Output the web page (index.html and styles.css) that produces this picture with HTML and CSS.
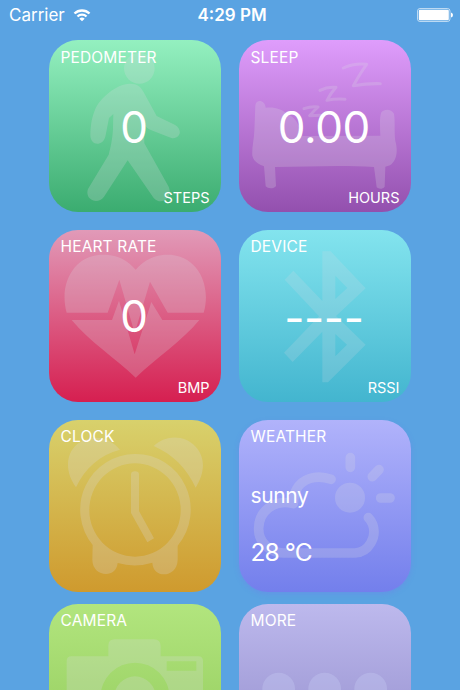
FILE: index.html
```html
<!DOCTYPE html>
<html lang="en">

<head>
    <meta charset="UTF-8">
    <meta name="viewport" content="width=device-width, initial-scale=1.0">
    <title>Dashboard</title>
    <link rel="stylesheet" href="styles.css">
</head>

<body>
    <header class="status-bar">
        <div class="carrier">
            <span>Carrier</span>
            <svg class="wifi" viewBox="0 0 54 42">
                <path d="M2 14 A36 36 0 0 1 52 14 L47 19 A29 29 0 0 0 7 19 Z" />
                <path d="M11 23 A23 23 0 0 1 43 23 L38 28 A16 16 0 0 0 16 28 Z" />
                <path d="M19 32 A11.500 11.500 0 0 1 35 32 L27 40 Z" />
            </svg>
        </div>
        <div class="time">4:29 PM</div>
        <svg class="battery" viewBox="0 0 36 14">
            <rect class="battery-case" x="0.500" y="0.500" width="32.500" height="13" rx="2.500" />
            <rect x="1.800" y="1.700" width="30" height="10.600" rx="1.200" />
            <path d="M34 4.500 Q36 5 36 7 Q36 9 34 9.500 Z" />
        </svg>
    </header>

    <main class="tiles">
        <section class="tile pedometer">
            <svg class="art" viewBox="27 30 516 516">
                <circle cx="298" cy="115" r="46" />
                <path d="M270 161 C292 161 303 171 311 187 L350 258 L404 284 C430 298 421 329 394 324 L338 302 C324 297 318 292 312 282 L313 340 L386 470 C400 503 364 529 341 504 L263 391 L192 500 C172 527 133 508 144 477 L206 374 C212 350 217 330 219 296 L220 252 L207 264 L196 320 C189 348 151 350 151 314 C152 281 157 258 166 237 C178 207 230 160 270 161 Z" />
            </svg>
            <h2>PEDOMETER</h2>
            <p class="value">0</p>
            <p class="unit">STEPS</p>
        </section>

        <section class="tile sleep">
            <svg class="art" viewBox="27 30 516 516">
                <path d="M76 226 C78 207 105 208 107 233 C135 230 154 237 171 251 C193 261 208 279 217 318 L451 317 C450 292 448 261 454 247 C463 236 484 237 492 251 C496 274 492 304 496 333 C506 368 497 395 480 406 L466 410 L464 470 C458 478 446 478 440 472 L432 411 C330 404 235 410 135 411 L138 468 C132 477 114 477 107 469 L102 409 C84 403 71 393 67 377 C65 354 72 329 73 303 Z" />
                <path class="line" d="M340 114 Q372 99 410 103 Q391 129 370 167 Q411 160 451 161 M270 181 Q293 169 318 172 Q302 190 291 211 Q320 205 345 208 M222 236 Q245 228 264 231 Q250 244 239 257 L270 256" />
            </svg>
            <h2>SLEEP</h2>
            <p class="value">0.00</p>
            <p class="unit">HOURS</p>
        </section>

        <section class="tile heart">
            <svg class="art" viewBox="27 24 516 516">
                <path d="M80 272 C56 187 101 98 188 98 C235 98 263 115 287 143 C314 114 340 98 384 98 C470 98 516 187 491 272 L383 272 L330 179 L284 334 L238 173 L203 272 Z" />
                <path d="M95 294 L216 294 L237 236 L284 397 L334 240 L367 294 L478 294 C424 359 350 407 287 467 C224 407 150 360 95 294 Z" />
            </svg>
            <h2>HEART RATE</h2>
            <p class="value">0</p>
            <p class="unit">BMP</p>
        </section>

        <section class="tile device">
            <svg class="art" viewBox="27 24 516 516">
                <path fill-rule="evenodd" d="M277 88 L302 88 L407 199 L318 282 L407 368 L294 481 L277 481 L277 329 L188 420 L162 392 L267 283 L164 173 L190 146 L277 237 Z M316 161 L316 231 L352 198 Z M316 336 L316 403 L351 368 Z" />
            </svg>
            <h2>DEVICE</h2>
            <p class="value">----</p>
            <p class="unit">RSSI</p>
        </section>

        <section class="tile clock">
            <svg class="art" viewBox="27 30 516 516">
                <path d="M108 232 C73 184 78 132 111 103 C149 72 206 77 240 119 C181 134 135 174 108 232 Z" />
                <path d="M341 108 C380 72 435 76 467 110 C499 145 493 192 467 233 C439 173 399 134 341 108 Z" />
                <path fill-rule="evenodd" d="M285 132 A165 167 0 0 1 413 407 L413 449 C412 504 339 508 337 458 Q285 474 233 459 C229 507 157 501 157 449 L158 405 A165 167 0 0 1 285 132 Z M285 160 A137 140 0 1 0 285 440 A137 140 0 1 0 285 160 Z" />
                <path d="M273 194 Q273 184 285 184 Q297 184 297 194 L297 303 L342 385 L322 397 L273 309 Z" />
            </svg>
            <h2>CLOCK</h2>
        </section>

        <section class="tile weather">
            <svg class="art" viewBox="27 30 516 516">
                <circle cx="360" cy="263" r="45" />
                <path class="line" d="M361 143 V172 M427 200 L447 179 M452 264 H480" />
                <path class="line" d="M303 208 C257 191 214 208 199 239 Q192 251 190 281 C130 266 87 305 86 354 C84 395 119 428 160 429 L375 429 C418 427 441 379 428 343 Q424 332 415 323" />
            </svg>
            <h2>WEATHER</h2>
            <p class="sky">sunny</p>
            <p class="degrees">28 °C</p>
        </section>

        <section class="tile camera">
            <svg class="art" viewBox="27 42 516 516">
                <path fill-rule="evenodd" d="M80 213 Q80 199 94 199 L205 199 L205 167 Q205 148 224 148 L341 148 Q362 148 362 169 L362 199 L475 199 Q489 199 489 213 L489 440 Q489 455 474 455 L95 455 Q80 455 80 440 Z M285 218 A103 103 0 1 0 285 424 A103 103 0 1 0 285 218 Z M380 214 L380 242 L469 242 L469 214 Z" />
                <circle cx="285" cy="321" r="62" />
            </svg>
            <h2>CAMERA</h2>
        </section>

        <section class="tile more">
            <svg class="art" viewBox="27 42 516 516">
                <circle cx="146" cy="297" r="49" />
                <circle cx="284" cy="297" r="49" />
                <circle cx="422" cy="297" r="49" />
            </svg>
            <h2>MORE</h2>
        </section>
    </main>
</body>

</html>
```
FILE: styles.css
```css
* {
    box-sizing: border-box;
    margin: 0;
    padding: 0;
}

body {
    height: 690px;
    overflow: hidden;
    font-family: Inter, "Liberation Sans", sans-serif;
    color: white;
    background-color: #5aa3e2;
}

.status-bar {
    display: grid;
    grid-template-columns: 1fr auto 1fr;
    align-items: center;
    height: 30px;
    padding: 0 7px 0 9px;
    font-size: 17px;
}

.carrier {
    display: flex;
    align-items: center;
    gap: 8px;
}

.wifi {
    width: 18px;
    height: 14px;
    fill: white;
}

.time {
    padding-left: 2px;
    font-weight: 600;
    font-size: 17px;
}

.battery {
    width: 36px;
    height: 14px;
    justify-self: end;
    fill: white;
}

.battery-case {
    fill: none;
    stroke: rgba(255, 255, 255, 0.6);
}

.tiles {
    display: grid;
    grid-template-columns: 172px 172px;
    grid-template-rows: 172px 172px 172px 80px;
    column-gap: 18px;
    row-gap: 18px;
    height: 660px;
    padding: 10.4px 0 0 49px;
    overflow: hidden;
}

.tile {
    position: relative;
    display: flex;
    flex-direction: column;
    height: 172px;
    padding: 8px 11.5px 0;
    border-radius: 29px;
}

.tile.pedometer,
.tile.sleep {
    padding-top: 8.4px;
}

.art {
    position: absolute;
    inset: 0;
    width: 172px;
    height: 172px;
    fill: #dcdce4;
    opacity: 0.23;
}

.line {
    fill: none;
    stroke: #dcdce4;
    stroke-linecap: round;
    stroke-linejoin: round;
}

.tile h2,
.tile p {
    position: relative;
    font-weight: 400;
}

.tile h2 {
    font-size: 15.5px;
    line-height: 18px;
    letter-spacing: 0.15px;
}

.tile .value {
    flex: 0 0 122px;
    min-height: 0;
    padding-right: 2.4px;
    font-size: 44px;
    line-height: 121px;
    letter-spacing: -0.4px;
    text-align: center;
}

.tile .unit {
    font-size: 14.5px;
    line-height: 18px;
    text-align: right;
}

.pedometer {
    background: linear-gradient(#94f0c0, #3bac70);
}

.sleep {
    background: linear-gradient(#df9dfc, #9350ae);
}

.sleep .line {
    stroke-width: 9;
}

.heart {
    background: linear-gradient(#e19ab8, #d61f50);
}

.heart .unit,
.device .unit {
    line-height: 19px;
}

.device {
    background: linear-gradient(#83e4ee, #43b5cf);
}

.device .value {
    line-height: 125px;
}

.device .art {
    opacity: 0.18;
}

.clock {
    background: linear-gradient(#d8d16c, #cf9a2e);
}

.weather {
    background: linear-gradient(#b1b3fb, #737fec);
    box-shadow: 0 2px 5px rgba(115, 127, 236, 0.4);
}

.weather .line {
    stroke-width: 29;
}

.weather .sky {
    margin-top: 37px;
    font-size: 21px;
    line-height: 26px;
    letter-spacing: -0.4px;
}

.weather .degrees {
    margin-top: 28px;
    font-size: 24.5px;
    line-height: 30px;
    letter-spacing: -0.9px;
}

/* last row sits a little closer to the one above */
.camera,
.more {
    margin-top: -6px;
}

.camera {
    background: linear-gradient(#b2e57e, #8fc858);
}

.more {
    background: linear-gradient(#bdb9ed, #8f89c9);
}

.more .art {
    fill: #c9d0f6;
    opacity: 0.32;
}
```
